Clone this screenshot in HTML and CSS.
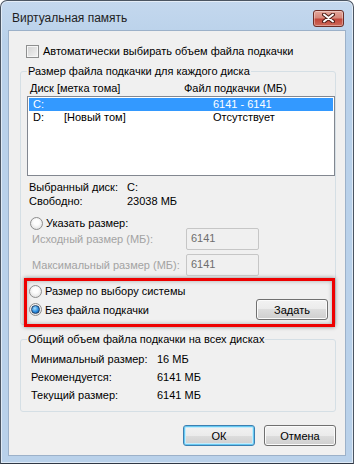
FILE: index.html
```html
<!DOCTYPE html>
<html lang="ru">
<head>
<meta charset="utf-8">
<title>Виртуальная память</title>
<link rel="stylesheet" href="styles.css">
</head>
<body>
<div class="window">
    <div class="titlebar">
        <span class="title">Виртуальная память</span>
        <span class="close">
            <svg width="13" height="10" viewBox="0 0 13 10">
                <path d="M2 1.5 L11 8.5 M2 8.5 L11 1.5" stroke="#4d1d17" stroke-width="4" stroke-linecap="round"/>
                <path d="M2 1.5 L11 8.5 M2 8.5 L11 1.5" stroke="#fff" stroke-width="2" stroke-linecap="round"/>
            </svg>
        </span>
    </div>
    <div class="client">
        <div class="check-row"><span class="checkbox"></span><span>Автоматически выбирать объем файла подкачки</span></div>

        <fieldset class="group">
            <legend>Размер файла подкачки для каждого диска</legend>
            <div class="list-head"><span>Диск [метка тома]</span><span>Файл подкачки (МБ)</span></div>
            <div class="listbox">
                <div class="item selected"><span>C:</span><span></span><span>6141 - 6141</span></div>
                <div class="item"><span>D:</span><span>[Новый том]</span><span>Отсутствует</span></div>
            </div>
            <div class="info">
                <span>Выбранный диск:</span><span>C:</span>
                <span>Свободно:</span><span>23038 МБ</span>
            </div>
            <div class="radio-row custom"><span class="radio"></span><span>Указать размер:</span></div>
            <div class="size-row"><span class="dim">Исходный размер (МБ):</span><span class="field">6141</span></div>
            <div class="size-row"><span class="dim">Максимальный размер (МБ):</span><span class="field">6141</span></div>
            <div class="mark">
                <div class="radio-row"><span class="radio"></span><span>Размер по выбору системы</span></div>
                <div class="radio-row last">
                    <span class="radio checked"></span><span>Без файла подкачки</span>
                    <span class="btn set">Задать</span>
                </div>
            </div>
        </fieldset>

        <fieldset class="group total">
            <legend>Общий объем файла подкачки на всех дисках</legend>
            <div class="totals">
                <span>Минимальный размер:</span><span>16 МБ</span>
                <span>Рекомендуется:</span><span>6141 МБ</span>
                <span>Текущий размер:</span><span>6141 МБ</span>
            </div>
        </fieldset>

        <div class="buttons">
            <span class="btn default">ОК</span>
            <span class="btn">Отмена</span>
        </div>
    </div>
</div>
</body>
</html>
```

FILE: styles.css
```css
html, body{
    margin: 0;
    padding: 0;
    background: #fff;
}
*{
    box-sizing: border-box;
    font-family: "Liberation Sans", Arial, sans-serif;
}
.window{
    width: 354px;
    height: 464px;
    border: 1px solid #4b5562;
    border-bottom: 1px solid #2f3844;
    border-radius: 7px 7px 0 0;
    background: linear-gradient(#c4d8ee, #b9d1ea 40px, #b9d1ea);
    box-shadow: inset 0 0 0 1px rgba(255,255,255,.55);
    padding: 0 7px 7px;
    display: flex;
    flex-direction: column;
    font-size: 11px;
    color: #000;
    white-space: nowrap;
}
.titlebar{
    height: 29px;
    display: flex;
    align-items: center;
    justify-content: space-between;
    padding: 5px 2px 0 4px;
}
.title{
    font-size: 12px;
    color: #1e1e1e;
}
.close{
    width: 31px;
    height: 17px;
    border: 1px solid #6c2d26;
    border-radius: 3px;
    background: linear-gradient(#e4a79c, #d6887b 45%, #c2473b 55%, #cd6a5a);
    box-shadow: inset 0 0 0 1px rgba(255,255,255,.35);
    display: flex;
    align-items: center;
    justify-content: center;
}
.client{
    flex: 1;
    background: #f0f0f0;
    border: 1px solid #9cb1c9;
}
.check-row{
    display: flex;
    align-items: center;
    gap: 4px;
    height: 16px;
    margin-top: 12px;
    padding-left: 17px;
}
.checkbox{
    width: 13px;
    height: 13px;
    border: 1px solid #8e8f8f;
    background: linear-gradient(135deg, #d2d2d2, #f4f4f4);
    box-shadow: inset 0 0 0 1px #f6f6f6;
}
.group{
    margin: 4px 9px 0 11px;
    padding: 1px 0 0 6px;
    border: 1px solid #d5dfe5;
    border-radius: 3px;
    min-width: 0;
}
.group legend{
    padding: 0 1px;
    line-height: 16px;
}
.list-head{
    display: grid;
    grid-template-columns: 154px auto;
    line-height: 16px;
    padding-left: 3px;
}
.listbox{
    height: 80px;
    border: 1px solid #828790;
    background: #fff;
    padding: 1px 1px 0;
}
.item{
    display: grid;
    grid-template-columns: 31px 149px auto;
    height: 13px;
    line-height: 13px;
    padding-left: 4px;
}
.item.selected{
    background: #3399ff;
    color: #fff;
}
.info{
    display: grid;
    grid-template-columns: 98px auto;
    line-height: 14px;
    margin-top: 4px;
    padding-left: 2px;
}
.radio-row{
    display: flex;
    align-items: center;
    gap: 3px;
    height: 16px;
}
.radio-row.custom{
    margin-top: 7px;
    padding-left: 3px;
}
.radio{
    width: 13px;
    height: 13px;
    border-radius: 50%;
    border: 1px solid #8d8d8d;
    background: radial-gradient(circle at 50% 40%, #fdfdfd 30%, #e2e2e2 80%);
    display: flex;
    align-items: center;
    justify-content: center;
}
.radio.checked::after{
    content: "";
    width: 7px;
    height: 7px;
    border-radius: 50%;
    border: 1px solid #1f3f66;
    background: radial-gradient(circle at 40% 35%, #a9e1ff, #2a8ce0 55%, #0f4b8f);
}
.size-row{
    display: grid;
    grid-template-columns: 154px 73px;
    align-items: center;
    height: 22px;
    margin-top: 4px;
    padding-left: 5px;
}
.custom + .size-row{
    margin-top: -3px;
}
.dim{
    color: #a3a3a3;
}
.field{
    height: 22px;
    border: 1px solid #c6c6c6;
    border-radius: 2px;
    color: #6d6d6d;
    padding-left: 4px;
    line-height: 18px;
}
.mark{
    margin: 2px 0 -3px -3px;
    border: 3px solid #ee0000;
    box-shadow: 0 0 4px rgba(0,0,0,.45), inset 0 0 4px rgba(0,0,0,.3);
    padding: 2px 4px 4px 2px;
    background: #f0f0f0;
}
.mark .radio-row.last{
    height: 21px;
}
.set{
    margin-left: auto;
    width: 73px;
}
.btn{
    display: flex;
    align-items: center;
    justify-content: center;
    width: 72px;
    height: 21px;
    border: 1px solid #707070;
    border-radius: 3px;
    background: linear-gradient(#f2f2f2, #ebebeb 50%, #dddddd 50%, #cfcfcf);
    box-shadow: inset 0 0 0 1px #fbfbfb;
}
.btn.default{
    border-color: #3c7fb1;
    box-shadow: inset 0 0 0 1px #67c9f2, inset 0 0 0 2px #c5ebfb;
}
.total{
    margin-top: 6px;
}
.totals{
    display: grid;
    grid-template-columns: 126px auto;
    line-height: 18px;
    padding: 2px 0 7px 4px;
}
.buttons{
    display: flex;
    justify-content: flex-end;
    gap: 9px;
    margin: 13px 9px 0 0;
}
```
